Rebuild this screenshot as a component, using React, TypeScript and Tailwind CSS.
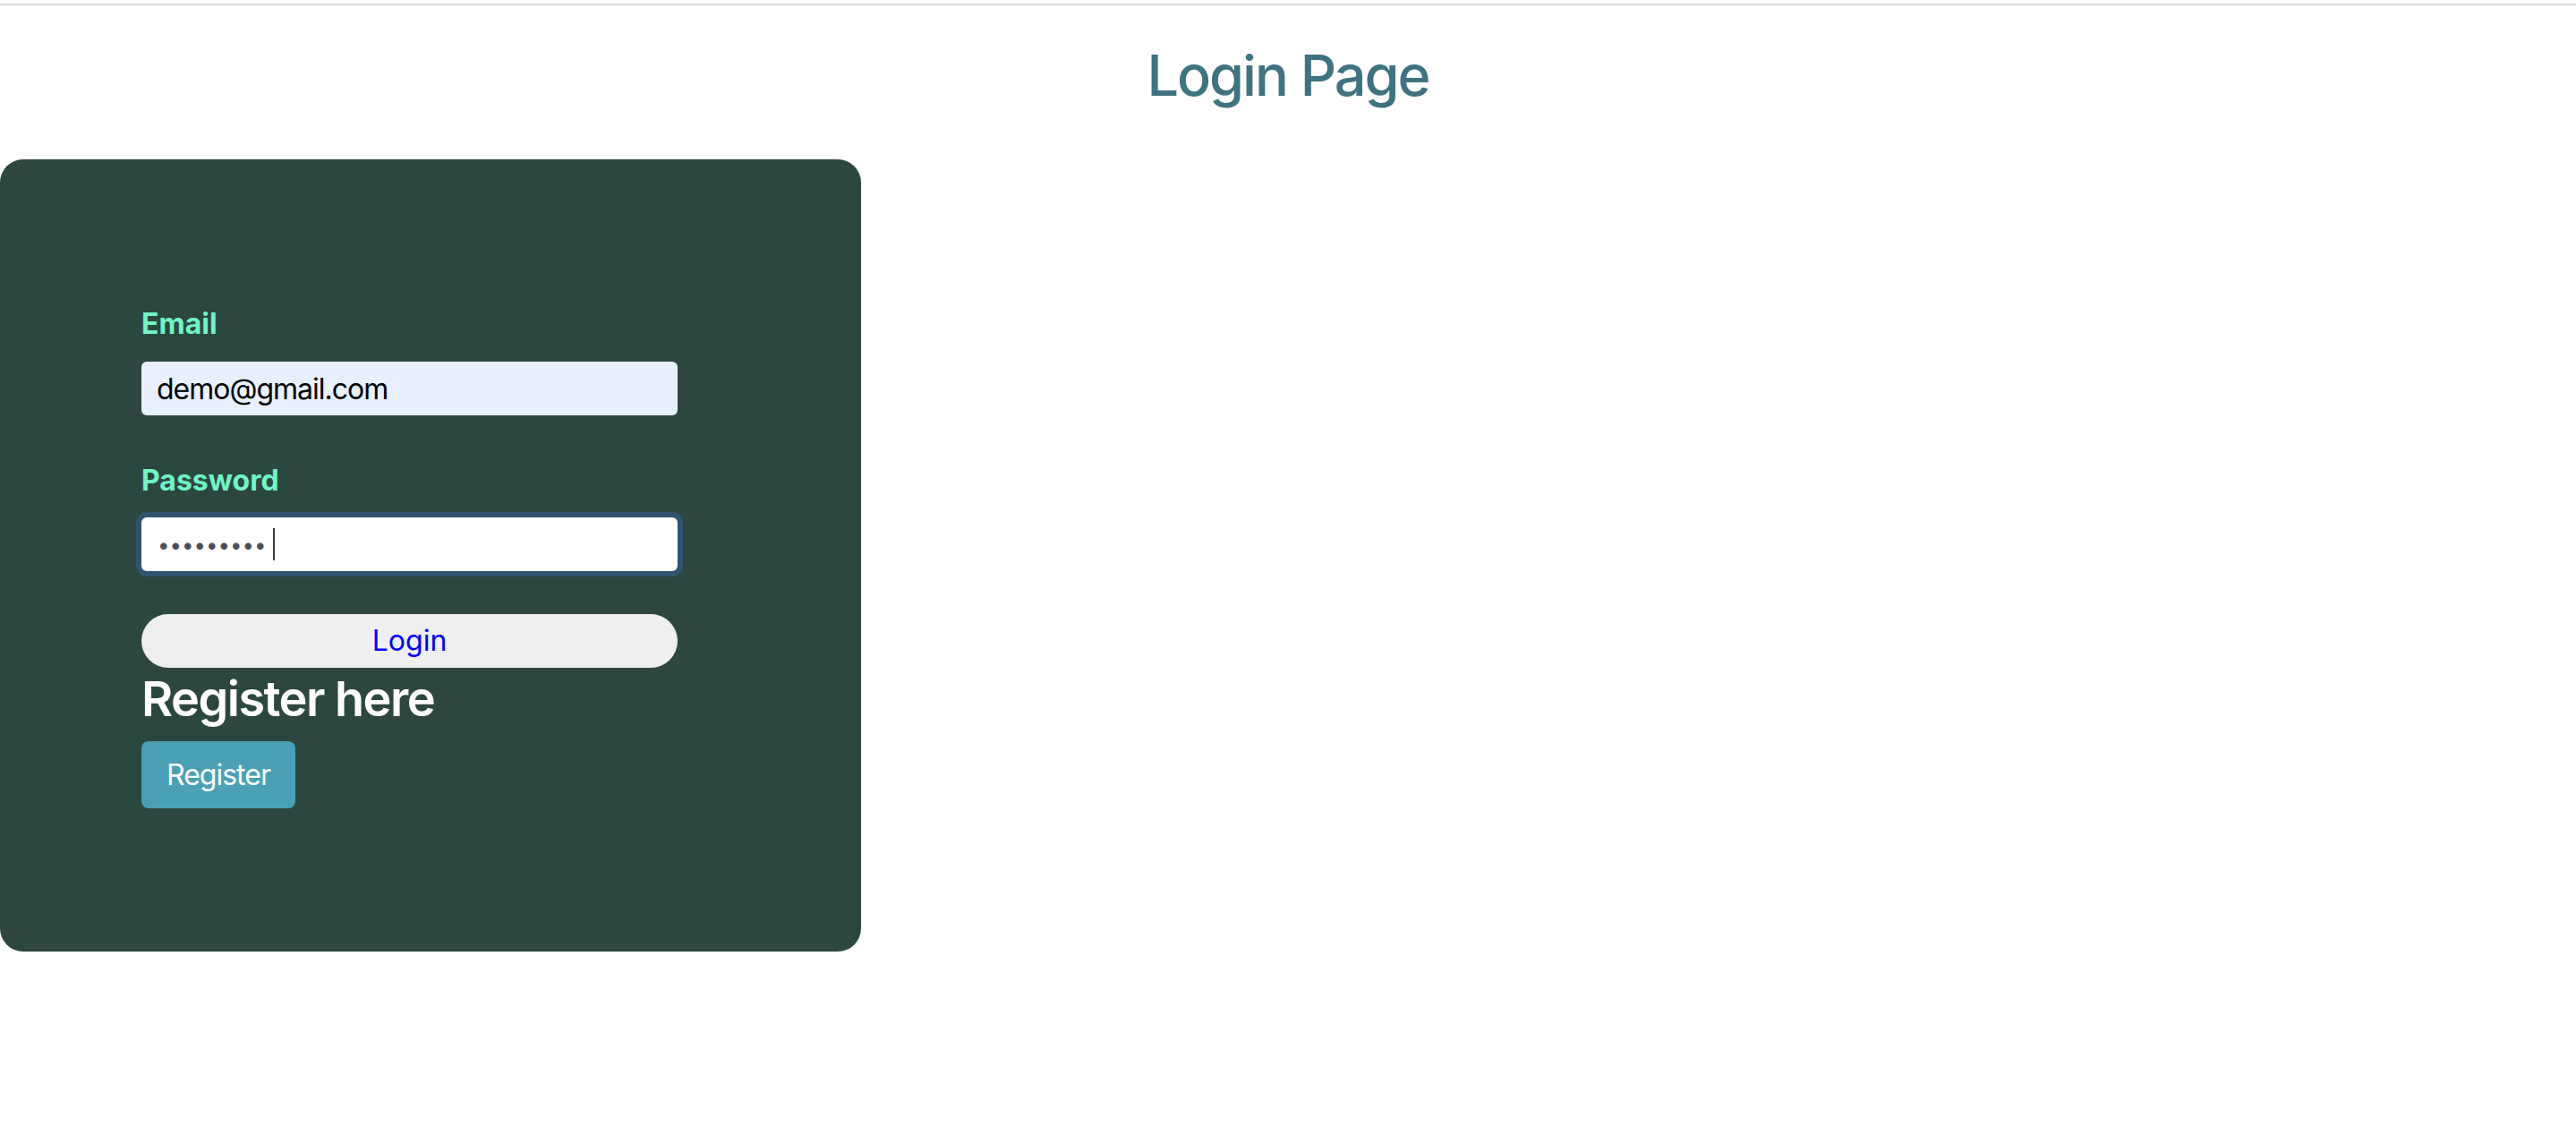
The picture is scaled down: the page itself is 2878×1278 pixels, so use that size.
import React from "react";

export default function App() {
  return (
    <div className="min-h-screen bg-white font-['Inter','Noto_Sans',sans-serif]">
      <div className="h-[6px] border-b-2 border-[#d9d9dc]" />
      <h1 className="mt-[40px] text-center text-[63px] leading-[77px] font-medium tracking-[-2px] text-[#3e7381]">
        Login Page
      </h1>
      <div className="mt-[55px] w-[962px] h-[885px] rounded-[26px] bg-[#2c4740] pl-[158px] pt-[164px]">
        <form className="flex w-[599px] flex-col" onSubmit={(e) => e.preventDefault()}>
          <label htmlFor="email" className="block text-[32px] leading-[39px] font-bold text-[#6ff6c6]">
            Email
          </label>
          <input
            id="email"
            type="email"
            readOnly
            value="demo@gmail.com"
            className="mt-[23px] h-[60px] w-[599px] rounded-[6px] bg-[#e8f0fe] px-[17px] text-[32px] tracking-[-1px] text-black outline-none"
          />
          <label htmlFor="password" className="mt-[53px] block text-[32px] leading-[39px] font-bold text-[#6ff6c6]">
            Password
          </label>
          <div className="relative mt-[22px] h-[60px] w-[599px]">
            <input
              id="password"
              type="password"
              readOnly
              value="123456789"
              className="h-[60px] w-[599px] rounded-[6px] bg-white pl-[18px] text-[24px] tracking-[0px] text-[#4b5058] caret-transparent outline-none ring-[6px] ring-[#2f5470]"
            />
            <span className="pointer-events-none absolute left-[147px] top-[12px] h-[36px] w-[2px] bg-[#3a3a3a]" />
          </div>
          <button
            type="submit"
            className="mt-[48px] h-[60px] w-[599px] rounded-full bg-[#efefef] text-[32px] text-[#0000ff]"
          >
            Login
          </button>
          <h2 className="mt-[2px] text-[54px] leading-[65px] font-semibold tracking-[-1.5px] text-white">
            Register here
          </h2>
          <button
            type="button"
            className="mt-[15px] h-[75px] w-[172px] rounded-[8px] bg-[#4aa0b5] text-[32px] tracking-[-1px] text-white"
          >
            Register
          </button>
        </form>
      </div>
    </div>
  );
}
